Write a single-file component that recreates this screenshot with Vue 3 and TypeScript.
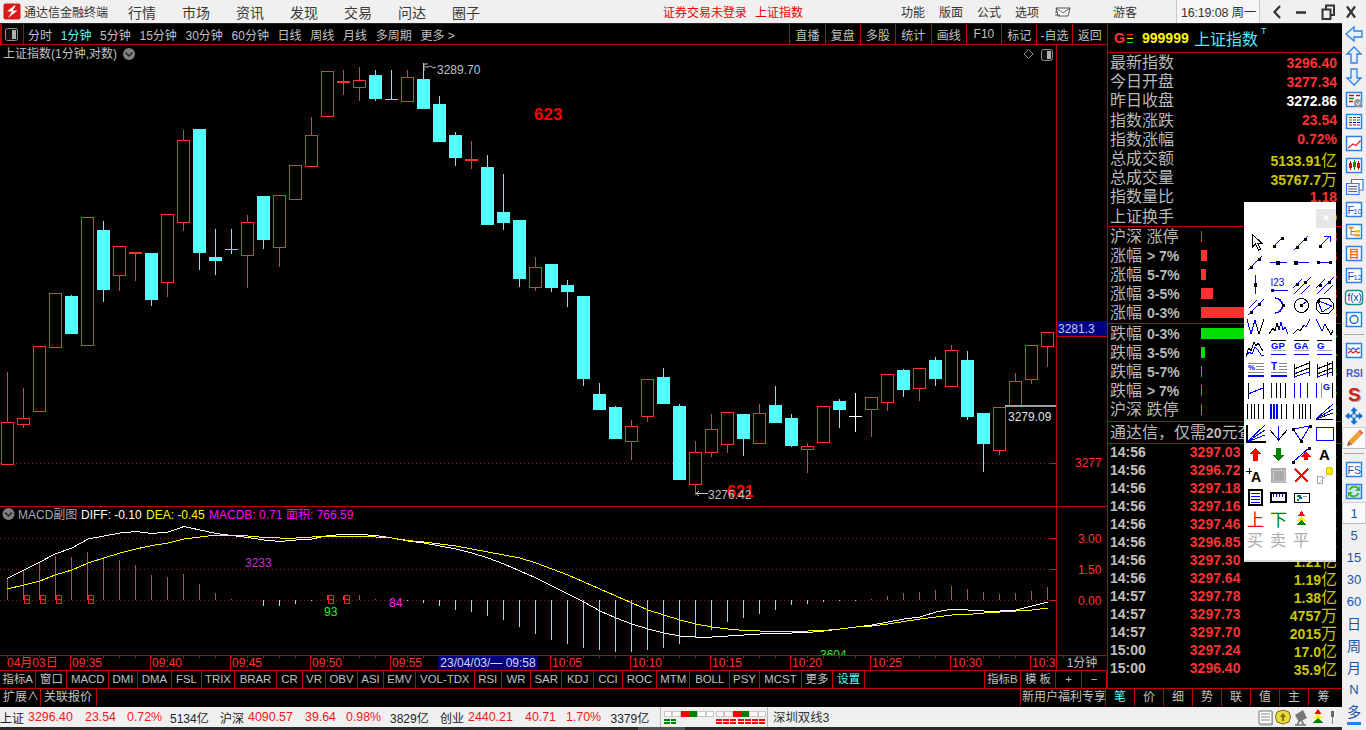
<script setup lang="ts">
interface Prim { d?: string; s?: string; f?: string; w?: number; t?: string; x?: number; y?: number; fs?: number; b?: boolean; fam?: string }
type Icon = Prim[]

const BL = '#0000ff'
const BK = '#000000'
const L = (d: string, s: string = BL, w = 1): Prim => ({ d, s, f: 'none', w })
const dot = (x: number, y: number): Prim => ({ d: `M${x - 1.5} ${y - 1.5}h3v3h-3z`, f: BK })
const T = (t: string, x: number, y: number, fs: number, f: string, b = false): Prim => ({ t, x, y, fs, f, b })
const F = (d: string, f: string): Prim => ({ d, f })

const palette: Icon[] = [
  [{ d: 'M8.5 3.5V16l3-3 3 6 2-1-3-6h4z', s: BK, f: '#fff', w: 1 }],
  [L('M7 15L16 6'), dot(7, 15), dot(15, 7)],
  [L('M4 19L18 5'), dot(7, 16), dot(15, 8)],
  [L('M7 15L17 5'), L('M11 5H17V11'), dot(7, 15)],

  [L('M4 18L18 4'), dot(7, 15), dot(15, 7)],
  [L('M3 10.5H20'), F('M9 8.5h4v4h-4z', BK)],
  [L('M5 10.5H19'), F('M4 8.5h4v4h-4z', BK)],
  [L('M4 10.5H19'), dot(5, 10.5), dot(17, 10.5)],

  [L('M11.5 1V20'), F('M10 8.5h3v4h-3z', BK)],
  [T('I23', 3.5, 11.5, 10, BL), L('M5 16.5H21'), dot(5, 16.5)],
  [L('M3 14L12 5M4 20L21 3M11 20L20 11'), dot(7, 10), dot(15, 8)],
  [L('M3 14L12 5M4 20L21 3M11 20L20 11'), dot(7, 11), dot(16, 8)],

  [L('M5 13L13 5M4 20L20 4'), dot(7, 17), dot(15, 9)],
  [L('M8 3A7.5 7.5 0 0 1 8 18', BL, 1.5), dot(16, 10.5)],
  [{ d: 'M4.5 10.5a7 7 0 1 0 14 0a7 7 0 1 0 -14 0', s: BK, f: 'none', w: 1 }, L('M11.5 10.5L17 6'), dot(11.5, 10.5)],
  [{ d: 'M7 3.5H16L20 8V14L16 18H7L3 14V8Z', s: BK, f: 'none', w: 1 }, L('M5 6L19 11L9 17Z'), dot(5, 6)],

  [L('M3 3L7 18L11 4'), L('M11 4L15 18L20 3', BK)],
  [L('M2 18L6 12L8 15L10 7L12 14', BK), L('M12 14L14 6L16 14L18 11L21 18')],
  [L('M3 18L8 13L10 15L14 9', BK), L('M14 9L16 11L20 3')],
  [L('M3 3L9 15L12 8', BL), L('M12 8L18 19L20 14', BK)],

  [L('M2 18L5 11L7 14L10 5L12 9L14 6L19 14', BK), L('M2 20L5 15L8 17L11 10L14 13L17 18L20 19')],
  [L('M4 3.5H19', BK), T('GP', 4, 11.5, 9.5, BL, true), L('M4 13.5H19', '#aaaaaa', 1), L('M4 17.5H19')],
  [L('M4 3.5H19', BK), T('GA', 4, 11.5, 9.5, BL, true), L('M4 13.5H19', '#aaaaaa', 1), L('M4 17.5H19')],
  [L('M4 3.5H19', BK), T('G', 4, 11.5, 9.5, BL, true), L('M4 13.5H19', '#aaaaaa', 1), L('M4 17.5H19')],

  [L('M4 4.5H20M12 7.5H20M12 10.5H20', '#888888'), T('%', 4, 11, 8, BL, true), L('M4 13.5H20', '#888888'), L('M4 17H20', BL, 2)],
  [L('M12 4.5H20M12 7.5H20M12 10.5H20', '#888888'), T('T', 4, 11, 10, BL, true), L('M4 13.5H20', '#888888'), L('M4 17H20', BL, 2)],
  [L('M4.5 5V19M19.5 2V17', BK), L('M4 10L19 4M4 15L19 9', BK), L('M4 18L19 13')],
  [L('M4.5 5V19M19.5 2V17M14.5 3V18', BK), L('M4 10L19 4M4 15L19 9', BK), L('M4 18L19 13')],

  [L('M4.5 3V19M19.5 3V19', BK), L('M4 14L19 8')],
  [L('M4.5 3V18'), L('M9.5 3V18M13.5 3V18M18.5 3V18', BK)],
  [L('M4.5 3V18M10.5 3V18M17.5 3V18', BL, 1)],
  [L('M3.5 3V18'), L('M8.5 3V18', '#999999', 1), T('G', 10, 10, 9, BL, true), L('M19.5 3V18', BK)],

  [L('M3.5 3V18M7.5 3V18M10.5 3V18M14.5 3V18M19.5 3V18', BK)],
  [L('M4 3V18M7 3V18M9.5 3V18', BL, 2), L('M14.5 3V18M19.5 3V18', BK)],
  [L('M3.5 3V18M9.5 3V18M12.5 3V18M15.5 3V18M20.5 3V18', BK)],
  [L('M3 18L20 12', BK), L('M3 18L20 3M3 18L20 8'), L('M3 18.5H20', BK)],

  [L('M3 2V19H22', BK, 2), L('M3 19L21 2M3 19L21 7M3 19L21 12')],
  [L('M3 7L11.5 17L20 7', BK), L('M11.5 3V17')],
  [L('M3 6L20 3L11 18Z', BL, 1), dot(3, 6), dot(20, 3), dot(11, 18)],
  [L('M3.5 4.5H20.5V17.5H3.5Z', BL, 1)],

  [F('M11.5 4L17 10H14V17H9V10H6Z', '#ff0000')],
  [F('M11.5 17L17 11H14V4H9V11H6Z', '#008000')],
  [L('M3 18L19 4'), dot(3, 18), dot(19, 4), F('M16 7L21 13H18V16H14V13H11Z', '#ff0000')],
  [T('A', 6, 16, 15, BK, true)],

  [T('A', 7, 17, 14, BK, true), L('M5 3V9M2 6H8', BK)],
  [{ d: 'M5 4H18V17H5Z', s: '#aaaaaa', f: '#aaaaaa', w: 2 }, L('M6 5H17V16H6Z', '#cccccc', 1)],
  [L('M5 4L18 17M18 4L5 17', '#ff0000', 1.5)],
  [L('M4.5 11.5H9.5V18.5H4.5Z', '#aaaaaa'), L('M5 19L18 6', '#bbbbbb'), { d: 'M13 6a3.5 3.5 0 1 0 7 0a3.5 3.5 0 1 0 -7 0', f: '#ffee00', s: '#cccc00', w: 1 }],

  [{ d: 'M5 3H18V18H5Z', s: BK, f: '#fff', w: 2 }, L('M7 6.5H16M7 9.5H16M7 12.5H16M7 15.5H16')],
  [L('M4 6H19V15H4Z', BK, 2), L('M6.5 7V10M9.5 7V10M12.5 7V10M15.5 7V10')],
  [L('M4.5 6.5H19.5V15.5H4.5Z', BK), F('M7 8h4v2H7z', '#008040'), F('M9 10h3v2H9z', '#0060c0'), F('M7 12h2v2H7z', '#008040'), L('M13 9.5H17', '#999999')],
  [],

  [T('上', 3, 18, 17, '#ff0000')],
  [T('下', 3, 18, 17, '#008000')],
  [F('M11.5 3L15 8H8Z', '#ff0000'), F('M11.5 7.5L16 12.5H7Z', '#ffee00'), F('M11.5 12L17 17H6Z', '#008000')],
  [],

  [T('买', 3, 17, 16, '#aaaaaa')],
  [T('卖', 3, 17, 16, '#aaaaaa')],
  [T('平', 3, 17, 16, '#aaaaaa')],
  [],
]

const SB = '#2c80ea'
const box: Prim = { d: 'M3.5 4.5H18.5V18.5H3.5Z', s: SB, f: '#fff', w: 1.5 }
interface Side { ic?: Icon; label?: string; big?: boolean; active?: boolean; sep?: boolean }
const side: Side[] = [
  { ic: [{ d: 'M3 11L11 4V8H19V14H11V18Z', s: SB, f: '#e6f1ff', w: 1.3 }] },
  { ic: [{ d: 'M11 3L18 10H14V19H8V10H4Z', s: SB, f: '#e6f1ff', w: 1.3 }] },
  { ic: [{ d: 'M11 19L18 12H14V3H8V12H4Z', s: SB, f: '#e6f1ff', w: 1.3 }] },
  { ic: [box, L('M6 7.5H11M13 7.5H17', '#e00000', 1.5), L('M6 10.5H11', '#008000', 1.5), L('M6 13.5H10', '#e00000', 1.5), { d: 'M11 15a4 4 0 1 0 8 0a4 4 0 1 0 -8 0', f: '#999999' }, L('M13 15l2 2 2-3', '#fff', 1)] },
  { ic: [box, L('M6 7.5H9M10 7.5H13M14 7.5H17', '#e00000', 1.2), L('M6 10H9M10 10H13M14 10H17', '#008000', 1.2), L('M6 12.5H9M10 12.5H13M14 12.5H17', '#0000e0', 1.2), L('M6 15H9M10 15H13M14 15H17', '#e00000', 1.2)] },
  { ic: [box, L('M5 16L10 12L13 13.5L17.5 8.5', '#e82020', 1.2)] },
  { ic: [box, F('M6 9h3v5H6z', '#e00000'), L('M7.5 7V16', '#e00000'), F('M10 8h3v5h-3z', '#009000'), L('M11.5 6V16', '#009000'), F('M14 9h3v5h-3z', '#e00000'), L('M15.5 7V16', '#e00000')] },
  { ic: [{ d: 'M8.5 3.5H20V14H8.5Z', s: SB, f: '#fff', w: 1.2 }, { d: 'M3.5 7.5H16V18.5H3.5Z', s: SB, f: '#e8eef8', w: 1.2 }, L('M5.5 10.5H14M5.5 13H14M5.5 15.5H14', '#666666', 1.2)] },
  { ic: [box, T('F', 4.5, 16, 11, '#1050d0'), T('10', 10.5, 16, 7.5, '#1050d0')] },
  { ic: [box, F('M5.5 6.5h5v2.5h-5z', '#f0a020'), L('M8 9V15H12M8 11.5H12', '#777777'), F('M12 10h5v2.5h-5z', '#f0c020'), F('M12 14h5v2.5h-5z', '#f0a020')] },
  { ic: [box, T('目', 5.5, 16, 11, '#e87010', true)] },
  { ic: [box, T('F', 4.5, 16, 11, '#1050d0'), T('12', 10.5, 16, 7.5, '#1050d0')] },
  { ic: [{ d: 'M6 4.5H16Q19.5 4.5 19.5 8V15Q19.5 18.5 16 18.5H6Q2.5 18.5 2.5 15V8Q2.5 4.5 6 4.5Z', s: '#109080', f: '#fff', w: 1.4 }, T('f(x)', 4.5, 15, 10, '#0040a0', false)] },
  { ic: [box, L('M7 11.5a4 4 0 1 0 8 0a4 4 0 1 0 -8 0', '#1060d0', 1.4)] },
  { sep: true },
  { ic: [{ d: 'M3.5 4.5H18.5V18.5H3.5Z', s: SB, f: '#f4f8ff', w: 1.5 }, L('M5 9L8 11L10 9L13 11L15 9L17 10', '#3060e0', 1.2), L('M5 14L8 12L10 14L13 12L15 14L17 13', '#e02020', 1.2)] },
  { ic: [T('RSI', 3, 15.5, 10, '#4a58d8', true)] },
  { ic: [T('S', 6, 19, 19, '#aaaaaa', true), T('S', 5, 18, 19, '#d02020', true)] },
  { ic: [F('M11 2L14.5 6H12.5V9.5H9.5V6H7.5Z', '#1070d8'), F('M11 20L14.5 16H12.5V12.5H9.5V16H7.5Z', '#1070d8'), F('M2 11L6 7.5V9.5H9.5V12.5H6V14.5Z', '#1070d8'), F('M20 11L16 7.5V9.5H12.5V12.5H16V14.5Z', '#1070d8')] },
  { active: true, ic: [F('M4 19L5.5 14L15 4.5L18.5 8L9 17.5Z', '#f0a030'), F('M4 19L5.5 14L9 17.5Z', '#8a6a50'), F('M15 4.5L17 2.5L20.5 6L18.5 8Z', '#e07060')] },
  { sep: true },
  { ic: [box, T('FS', 4.5, 15.5, 10.5, '#1050d0', false)] },
  { ic: [{ d: 'M3.5 4.5H18.5V18.5H3.5Z', s: SB, f: '#cfe6fb', w: 1.5 }, L('M6.5 10a5 5 0 0 1 9-1', '#40b040', 2), F('M17 6V11H12Z', '#40b040'), L('M15.5 13a5 5 0 0 1-9 1', '#40b040', 2), F('M5 17V12H10Z', '#40b040')] },
  { label: '1', active: true },
  { label: '5' }, { label: '15' }, { label: '30' }, { label: '60' },
  { label: '日', big: true }, { label: '周', big: true }, { label: '月', big: true }, { label: 'N' }, { label: '多', big: true },
  { ic: [F('M4 0H18V3H4Z', SB)] },
]

const stIcons: { w: number; ic: Icon }[] = [
  { w: 18, ic: [{ d: 'M3 4H16V17H3Z', s: '#777777', f: '#fff', w: 1 }, L('M5 7H14M5 10H14M5 13H14', '#888888'), L('M16.5 5V18H4', '#999999')] },
  { w: 18, ic: [{ d: 'M9 3L15 5L16.5 10L15 15L9 17L3 15L1.5 10L3 5Z', s: '#807000', f: '#e8d840', w: 1 }, F('M9 6L12 10H10V14H8V10H6Z', '#807000')] },
  { w: 18, ic: [F('M3 8L11 3L15 11L7 15Z', '#777777'), L('M8 13L5 18M9 13L12 18M3 18H14', '#777777', 1.5)] },
  { w: 16, ic: [F('M8 2L11.5 7H4.5Z', '#e00000'), F('M8 6.5L12.5 11.5H3.5Z', '#ffee00'), F('M8 11L13.5 16H2.5Z', '#008000')] },
  { w: 14, ic: [F('M5 4h3v6H5z', '#666666'), L('M6.5 10V17', '#888888')] },
]

const tools = ['分时', '1分钟', '5分钟', '15分钟', '30分钟', '60分钟', '日线', '周线', '月线', '多周期', '更多 >']
const btns = ['直播', '复盘', '多股', '统计', '画线', 'F10', '标记', '-自选', '返回']

const times = ['09:35', '09:40', '09:45', '09:50', '09:55', '10:00', '10:05', '10:10', '10:15', '10:20', '10:25', '10:30', '10:35']

const tabs: [string, number, string?][] = [
  ['指标A', 36.4], ['窗口', 31], ['MACD', 41.6], ['DMI', 29], ['DMA', 34], ['FSL', 30], ['TRIX', 33], ['BRAR', 42],
  ['CR', 26], ['VR', 23], ['OBV', 32], ['ASI', 26], ['EMV', 32], ['VOL-TDX', 58.6], ['RSI', 27.4], ['WR', 29],
  ['SAR', 31.5], ['KDJ', 31.5], ['CCI', 29], ['ROC', 34], ['MTM', 33.5], ['BOLL', 39.5], ['PSY', 30], ['MCST', 42],
  ['更多', 31], ['设置', 32.5, 'cy'],
]
const tabsRight: [string, number][] = [['指标B', 35.7], ['模 板', 35.3], ['+', 26], ['−', 25]]

const panelTop: [string, string, string, string?][] = [
  ['最新指数', '3296.40', 'r'],
  ['今日开盘', '3277.34', 'r'],
  ['昨日收盘', '3272.86', 'w'],
  ['指数涨跌', '23.54', 'r'],
  ['指数涨幅', '0.72%', 'r'],
  ['总成交额', '5133.91', 'y', '亿'],
  ['总成交量', '35767.7', 'y', '万'],
  ['指数量比', '1.18', 'r'],
  ['上证换手', '0.73%', 'y'],
]

interface Dist { a: string; b?: string; bar: number; v: string }
const ups: Dist[] = [
  { a: '沪深 涨停', bar: 1, v: '28' },
  { a: '涨幅', b: '> 7%', bar: 6, v: '93' },
  { a: '涨幅', b: '5-7%', bar: 5, v: '84' },
  { a: '涨幅', b: '3-5%', bar: 12, v: '233' },
  { a: '涨幅', b: '0-3%', bar: 80, v: '3233' },
]
const downs: Dist[] = [
  { a: '跌幅', b: '0-3%', bar: 80, v: '1604' },
  { a: '跌幅', b: '3-5%', bar: 4, v: '84' },
  { a: '跌幅', b: '5-7%', bar: 1, v: '13' },
  { a: '跌幅', b: '> 7%', bar: 1, v: '3' },
  { a: '沪深 跌停', bar: 1, v: '2' },
]

const ticks: [string, string, string, string][] = [
  ['14:56', '3297.03', '1.10', '亿'], ['14:56', '3296.72', '1.02', '亿'], ['14:56', '3297.18', '1.33', '亿'],
  ['14:56', '3297.16', '1.05', '亿'], ['14:56', '3297.46', '1.40', '亿'], ['14:56', '3296.85', '1.16', '亿'],
  ['14:56', '3297.30', '1.21', '亿'], ['14:56', '3297.64', '1.19', '亿'], ['14:57', '3297.78', '1.38', '亿'],
  ['14:57', '3297.73', '4757', '万'], ['14:57', '3297.70', '2015', '万'], ['15:00', '3297.24', '17.0', '亿'],
  ['15:00', '3296.40', '35.9', '亿'],
]
const rightTabs = ['笔', '价', '细', '势', '联', '值', '主', '筹']

const status: [string, number, string][] = [
  ['上证', 28, 'k'], ['3296.40', 57, 'r'], ['23.54', 42, 'r'], ['0.72%', 43, 'r'], ['5134亿', 50, 'k'],
  ['沪深', 28, 'k'], ['4090.57', 57, 'r'], ['39.64', 41, 'r'], ['0.98%', 44, 'r'], ['3829亿', 50, 'k'],
  ['创业', 28, 'k'], ['2440.21', 57, 'r'], ['40.71', 41, 'r'], ['1.70%', 44.5, 'r'], ['3379亿', 49.5, 'k'],
]

// candles: kind, high, body top, body bottom, low (screen pixels)
const raw: [string, number, number, number, number][] = [
  ['r', 372, 422, 464, 464], ['r', 388, 418, 424, 427], ['r', 346, 346, 411, 411], ['r', 293, 293, 347, 347],
  ['c', 295, 296, 333, 333], ['r', 217, 217, 345, 345], ['c', 221, 230, 289, 301], ['r', 246, 246, 275, 290],
  ['r', 252, 252, 253, 280], ['c', 253, 253, 299, 305], ['r', 214, 214, 282, 296], ['r', 130, 140, 222, 230],
  ['c', 129, 129, 252, 269], ['c', 229, 257, 260, 274], ['w1', 229, 249, 249, 253], ['r', 215, 222, 255, 287],
  ['c', 196, 196, 239, 248], ['r', 195, 195, 247, 266], ['r', 165, 165, 199, 199], ['r', 117, 135, 166, 166],
  ['r', 71, 71, 116, 116], ['r', 70, 81, 82, 94], ['r', 67, 80, 87, 100], ['c', 70, 75, 98, 100],
  ['w1', 70, 99, 99, 99], ['r', 70, 77, 101, 101], ['c', 63, 79, 108, 108], ['c', 96, 104, 141, 141],
  ['c', 132, 135, 157, 165], ['r', 141, 159, 160, 168], ['c', 155, 167, 224, 224], ['c', 174, 212, 222, 229],
  ['c', 220, 220, 278, 286], ['r', 257, 267, 287, 290], ['c', 264, 264, 287, 291], ['c', 280, 285, 291, 306],
  ['c', 296, 296, 378, 385], ['c', 383, 394, 409, 409], ['c', 406, 407, 438, 438], ['r', 420, 426, 441, 459],
  ['r', 379, 379, 416, 421], ['c', 368, 377, 403, 403], ['c', 404, 406, 479, 479], ['r', 441, 452, 484, 494],
  ['r', 414, 429, 452, 456], ['r', 412, 412, 444, 452], ['c', 414, 414, 438, 455], ['r', 404, 413, 443, 443],
  ['c', 386, 405, 422, 422], ['c', 414, 418, 445, 446], ['r', 443, 446, 449, 472], ['r', 406, 406, 442, 442],
  ['c', 399, 401, 409, 427], ['w2', 393, 416, 416, 431], ['r', 397, 397, 409, 436], ['r', 374, 374, 402, 410],
  ['c', 369, 370, 389, 396], ['r', 368, 368, 388, 400], ['c', 357, 360, 378, 385], ['r', 345, 350, 386, 386],
  ['c', 351, 360, 416, 419], ['c', 413, 413, 443, 471], ['r', 407, 407, 450, 454], ['r', 373, 381, 405, 405],
  ['r', 345, 345, 379, 383], ['r', 332, 332, 346, 366],
]
const col = (k: string) => (k[0] === 'r' ? '#ff3232' : k[0] === 'c' ? '#54fcfc' : '#ffffff')
const candles = raw.map(([k0, h, t, b, l], i) => {
  let k = k0
  if (k === 'w1') k = 'c1'
  if (k === 'w2') k = 'w'
  return { cx: 7.5 + 16 * i, k, h, t, b, l, color: col(k) }
})

const macdTops = [578.7, 571, 562.7, 555.7, 557, 551.7, 557.3, 560, 565, 575, 577, 574, 584, 593, 599, 599.5, 606, 606, 604, 601, 595, 596, 595, 599, 599, 601, 603, 606, 610, 612, 616, 620, 627, 634, 640, 644, 648, 650, 652, 652, 650, 648, 644, 638, 630, 622, 618, 614, 610, 605, 604, 602, 601, 601, 599, 596, 593, 592, 590, 586, 589, 592, 594, 593, 591, 587]
const macdBars = macdTops.map((y, i) => ({ x: 7.5 + 16 * i, y: Math.round(y), color: y < 600 ? '#ff3232' : '#54fcfc' }))

const diffPts: [number, number][] = [[7, 578.5], [24, 570], [40, 562], [55, 554], [72, 548], [88, 539], [104, 536], [120, 533], [136, 531.5], [152, 533.5], [168, 532], [184, 526.5], [200, 530], [216, 533.5], [232, 535.5], [248, 537.5], [264, 540], [280, 541.5], [296, 540], [312, 539], [328, 535.5], [344, 534.5], [360, 534.5], [376, 535.5], [392, 538], [408, 541], [424, 543], [440, 546], [456, 549], [472, 553], [488, 558], [504, 564], [520, 571], [536, 578], [552, 586], [568, 594], [584, 602], [600, 611], [616, 618], [632, 624], [648, 629], [664, 633], [680, 636], [696, 637], [712, 637], [728, 636], [744, 635], [760, 634], [776, 633], [792, 633], [808, 632.5], [824, 631], [840, 629], [856, 627], [872, 625], [888, 622], [904, 619], [920, 617], [936, 612], [952, 609], [968, 610], [984, 611], [1000, 611], [1016, 610], [1032, 606], [1048, 602]]
const deaPts: [number, number][] = [[7, 589], [24, 585], [40, 581], [55, 575], [72, 570], [88, 563], [104, 558], [120, 553], [136, 549], [152, 545.5], [168, 543], [184, 539], [200, 537], [216, 535], [232, 535.5], [248, 536], [264, 537.5], [280, 538], [296, 538], [312, 537], [328, 536.5], [344, 536], [360, 536], [376, 537], [392, 538], [408, 540.5], [424, 542], [440, 544], [456, 546], [472, 549], [488, 552], [504, 555], [520, 558], [536, 563], [552, 569], [568, 575], [584, 582], [600, 589], [616, 596], [632, 603], [648, 610], [664, 615], [680, 620], [696, 624], [712, 627], [728, 629], [744, 630.5], [760, 631], [776, 631.5], [792, 631], [808, 631], [824, 630.5], [840, 629], [856, 627], [872, 626], [888, 624], [904, 621.5], [920, 619], [936, 617], [952, 615], [968, 614.5], [984, 613], [1000, 612], [1016, 611], [1032, 610], [1048, 608]]
const poly = (a: [number, number][]) => a.map((p) => p.join(',')).join(' ')
const diffLine = poly(diffPts)
const deaLine = poly(deaPts)

const signals = [26.5, 42.5, 58.5, 90.5, 330.5, 346.5]
const macdGrid: [number, string][] = [[538.5, '3.00'], [569.5, '1.50'], [600.5, '0.00']]
</script>

<template>
  <div class="app">
    <header class="title">
      <svg class="logo" width="18" height="17" viewBox="0 0 18 17">
        <rect x="0.5" y="0.5" width="17" height="16" rx="2" fill="#d81a1a" />
        <path d="M12 2L4 8.5H9L5 15L14.5 7.5H9.5L12.5 3Z" fill="#ffffff" />
      </svg>
      <span class="app-name">通达信金融终端</span>
      <nav class="menu">
        <span v-for="m in ['行情', '市场', '资讯', '发现', '交易', '问达', '圈子']" :key="m">{{ m }}</span>
      </nav>
      <span class="notice login">证券交易未登录</span>
      <span class="notice idx">上证指数</span>
      <nav class="submenu">
        <span v-for="m in ['功能', '版面', '公式', '选项']" :key="m">{{ m }}</span>
      </nav>
      <svg class="mail" width="16" height="12" viewBox="0 0 16 12">
        <path d="M1 2H15L13 10H3Z" fill="#ffffff" stroke="#555555" />
        <path d="M1 2L8 7L15 2M0 9H5M0 6H3" fill="none" stroke="#555555" />
      </svg>
      <span class="guest">游客</span>
      <span class="clock">16:19:08 周一</span>
      <svg class="win" width="104" height="22" viewBox="0 0 104 22">
        <path d="M20 5L14.5 11L20 17" fill="none" stroke="#333333" stroke-width="2.2" />
        <path d="M36 11.5H46" stroke="#333333" stroke-width="2.5" />
        <path d="M62.5 8.5H70.5V18H62.5ZM66 8V4.5H74V14H71" fill="none" stroke="#333333" stroke-width="2" />
        <path d="M87 5.5L95 16.5M95 5.5L87 16.5" stroke="#333333" stroke-width="2.2" />
      </svg>
    </header>

    <div class="body">
      <div class="workspace">
        <div class="upper">
          <section class="chart-col">
            <div class="toolbar">
              <div class="layout-btn">
                <svg width="13" height="13" viewBox="0 0 13 13">
                  <rect x="0.5" y="0.5" width="12" height="12" rx="2" fill="#111111" stroke="#909090" />
                  <rect x="7" y="2" width="4" height="9" fill="#b0b0b0" />
                </svg>
              </div>
              <div class="periods">
                <span v-for="t in tools" :key="t" :class="{ cy: t === '1分钟' }">{{ t }}</span>
              </div>
              <div class="btns">
                <span v-for="b in btns" :key="b" class="btn">{{ b }}</span>
              </div>
            </div>

            <svg class="stage" width="1107" height="610" viewBox="0 45 1107 610">
              <text x="3" y="58" class="t12" fill="#c0c0c0">上证指数(1分钟,对数)</text>
              <circle cx="129" cy="54" r="6" fill="#808080" />
              <path d="M125.5 52.5L129 56L132.5 52.5" fill="none" stroke="#222222" stroke-width="1.5" />
              <path d="M1028.5 49.5L1033 54L1028.5 58.5L1024 54Z" fill="none" stroke="#909090" />
              <rect x="1041.5" y="49.5" width="11" height="11" rx="2" fill="#111111" stroke="#909090" />
              <rect x="1047" y="51" width="4" height="8" fill="#b0b0b0" />

              <path d="M0 463.5H1050" stroke="#a02020" stroke-dasharray="1 3" />
              <g v-for="(c, i) in candles" :key="i" shape-rendering="crispEdges">
                <path :d="`M${c.cx} ${c.h}V${c.l + 1}`" :stroke="c.color" fill="none" />
                <rect v-if="c.k === 'r'" :x="c.cx - 6" :y="c.t + 0.5" width="12" :height="Math.max(c.b - c.t, 1)" fill="#000000" :stroke="c.color" />
                <rect v-else-if="c.k === 'c'" :x="c.cx - 6.5" :y="c.t" width="13" :height="c.b - c.t + 1" :fill="c.color" />
                <rect v-else :x="c.cx - 6.5" :y="c.t" width="13" height="1" :fill="c.color" />
              </g>

              <path d="M424 71V64H428M425 67H428" fill="none" stroke="#c0c0c0" />
              <path d="M428 67q2-2 4 0t4 0" fill="none" stroke="#c0c0c0" />
              <text x="437" y="74" class="t12" fill="#c0c0c0">3289.70</text>
              <text x="534" y="120" class="b17" fill="#ff0000">623</text>
              <text x="727" y="497" class="b15" fill="#ff0000">621</text>
              <path d="M708 493.5H696M699 491L696 493.5L699 496" fill="none" stroke="#c0c0c0" />
              <text x="708" y="499" class="t12" fill="#c0c0c0">3276.42</text>

              <rect x="1005" y="405" width="52" height="2" fill="#a0a0a0" />
              <text x="1008" y="421" class="t12" fill="#e0e0e0">3279.09</text>
              <rect x="1057" y="321" width="50" height="15" fill="#000080" />
              <text x="1058" y="333" class="t12" fill="#c8c8ff">3281.3</text>
              <path d="M1057 336.5H1107" stroke="#c00000" />
              <path d="M1050 463.5H1056" stroke="#c02020" />
              <text x="1075" y="467" class="t12" fill="#ff3232">3277</text>

              <path d="M1056.5 45V655" stroke="#c00000" shape-rendering="crispEdges" />
              <path d="M0 506.5H1107" stroke="#c00000" shape-rendering="crispEdges" />

              <circle cx="8.5" cy="514" r="6" fill="#808080" />
              <path d="M5 512.5L8.5 516L12 512.5" fill="none" stroke="#222222" stroke-width="1.5" />
              <text x="18" y="519" class="t12" fill="#a8a8a8">MACD副图</text>
              <text x="81" y="519" class="t12" fill="#ffffff">DIFF: -0.10</text>
              <text x="146" y="519" class="t12" fill="#ffff00">DEA: -0.45</text>
              <text x="209" y="519" class="t12" fill="#ff00ff">MACDB: 0.71</text>
              <text x="286" y="519" class="t12" fill="#ff00ff">面积: 766.59</text>

              <g v-for="g in macdGrid" :key="g[1]">
                <path :d="`M0 ${g[0]}H1050`" stroke="#901818" stroke-dasharray="1 3" />
                <path :d="`M1050 ${g[0]}H1056`" stroke="#c02020" />
                <text x="1078" :y="g[0] + 4" class="t12" fill="#ff3232">{{ g[1] }}</text>
              </g>

              <path v-for="b in macdBars" :key="b.x" :d="`M${b.x} ${b.y}V600`" :stroke="b.color" shape-rendering="crispEdges" />
              <polyline :points="diffLine" fill="none" stroke="#ffffff" shape-rendering="crispEdges" />
              <polyline :points="deaLine" fill="none" stroke="#ffff00" shape-rendering="crispEdges" />

              <g v-for="s in signals" :key="s" shape-rendering="crispEdges">
                <path :d="`M${s - 2.5} 595.5h5v8h-5zM${s - 2.5} 599.5h5`" fill="none" stroke="#ff2020" />
              </g>
              <text x="245" y="567" class="t12" fill="#c030d0">3233</text>
              <text x="324" y="616" class="t12" fill="#20f020">93</text>
              <text x="389" y="607" class="t12" fill="#ff20ff">84</text>
              <text x="820" y="659" class="t12" fill="#20f020">3604</text>
            </svg>

            <div class="axis">
              <span class="ax-date">04月03日</span>
              <span v-for="(t, i) in times" :key="t" class="ax-t" :class="{ 'ax-end': i === times.length - 1 }">{{ t }}</span>
              <span class="ax-box">1分钟</span>
              <span class="ax-cross">23/04/03/— 09:58</span>
            </div>

            <div class="tabs">
              <span v-for="t in tabs" :key="t[0]" class="tab" :class="t[2]" :style="{ width: t[1] + 'px' }">{{ t[0] }}</span>
              <span class="tab-fill"></span>
              <span v-for="t in tabsRight" :key="t[0]" class="tab" :style="{ width: t[1] + 'px' }">{{ t[0] }}</span>
            </div>
          </section>

          <aside class="panel">
            <div class="p-head">
              <span class="g">G</span>
              <svg width="8" height="12" viewBox="0 0 8 12" class="eq">
                <path d="M1 2.5H7" stroke="#ff3232" />
                <path d="M1 6.5H7" stroke="#ffff00" />
                <path d="M1 10.5H7" stroke="#20f020" />
              </svg>
              <span class="code">999999</span>
              <span class="nm">上证指数</span>
              <sup class="tt">T</sup>
            </div>
            <div class="p-top">
              <div v-for="r in panelTop" :key="r[0]" class="p-row">
                <span class="lbl">{{ r[0] }}</span>
                <span class="num" :class="r[2]">{{ r[1] }}<i v-if="r[3]" class="unit">{{ r[3] }}</i></span>
              </div>
            </div>
            <div class="p-dist">
              <div v-for="d in ups" :key="d.a + d.b" class="d-row">
                <span class="d-lbl">{{ d.a }}<b v-if="d.b" class="d-b">{{ d.b }}</b></span>
                <span class="d-bar up" :style="{ width: d.bar + 'px' }"></span>
                <span class="num r d-v">{{ d.v }}</span>
              </div>
            </div>
            <div class="p-dist last">
              <div v-for="d in downs" :key="d.a + d.b" class="d-row">
                <span class="d-lbl">{{ d.a }}<b v-if="d.b" class="d-b">{{ d.b }}</b></span>
                <span class="d-bar down" :style="{ width: d.bar + 'px' }"></span>
                <span class="num g-t d-v">{{ d.v }}</span>
              </div>
            </div>
            <div class="banner">通达信，仅需<b>20</b>元查看</div>
            <div class="p-ticks">
              <div v-for="(t, i) in ticks" :key="i" class="t-row">
                <span class="num gray">{{ t[0] }}</span>
                <span class="num r t-p">{{ t[1] }}</span>
                <span class="num y t-v">{{ t[2] }}<i class="unit">{{ t[3] }}</i></span>
              </div>
            </div>

            <div class="palette">
              <span class="pal-x">×</span>
              <svg v-for="(ic, i) in palette" :key="i" width="23" height="21" viewBox="0 0 23 21" class="pal-ic">
                <template v-for="(p, j) in ic" :key="j">
                  <text v-if="p.t" :x="p.x" :y="p.y" :font-size="p.fs" :fill="p.f" :font-weight="p.b ? 700 : 400" class="ic-t">{{ p.t }}</text>
                  <path v-else :d="p.d" :stroke="p.s || 'none'" :fill="p.f || 'none'" :stroke-width="p.w || 1" />
                </template>
              </svg>
            </div>
          </aside>
        </div>

        <div class="extra">
          <span class="ex">扩展∧</span>
          <span class="ex">关联报价</span>
          <span class="ex-fill"></span>
          <span class="ex promo">新用户福利专享</span>
          <span v-for="t in rightTabs" :key="t" class="r-tab" :class="{ cy: t === '笔' }">{{ t }}</span>
        </div>

        <footer class="status">
          <span v-for="(s, i) in status" :key="i" class="st" :class="s[2]" :style="{ width: s[1] + 'px' }">{{ s[0] }}</span>
          <div class="st-box">
            <div v-for="(kind, n) in ['g', 'r']" :key="n" class="mini">
              <div class="mini-top">
                <i></i><i></i><i class="m-r"></i><i class="m-g"></i><i></i><i></i>
              </div>
              <div class="mini-row" :class="kind"></div>
              <div class="mini-row" :class="kind"></div>
            </div>
          </div>
          <span class="st-name">深圳双线3</span>
          <div class="st-icons">
            <svg v-for="(s, i) in stIcons" :key="i" :width="s.w" height="20" :viewBox="`0 0 ${s.w} 20`">
              <path v-for="(p, j) in s.ic" :key="j" :d="p.d" :stroke="p.s || 'none'" :fill="p.f || 'none'" :stroke-width="p.w || 1" />
            </svg>
          </div>
        </footer>
        <div class="sysbar"><i class="thumb"></i></div>
      </div>

      <aside class="sidebar">
        <template v-for="(s, i) in side" :key="i">
          <div v-if="s.sep" class="sb-sep"></div>
          <div v-else class="sb-cell" :class="{ active: s.active, big: s.big }">
            <svg v-if="s.ic" width="22" height="22" viewBox="0 0 22 22">
              <template v-for="(p, j) in s.ic" :key="j">
                <text v-if="p.t" :x="p.x" :y="p.y" :font-size="p.fs" :fill="p.f" :font-weight="p.b ? 700 : 400" class="ic-t">{{ p.t }}</text>
                <path v-else :d="p.d" :stroke="p.s || 'none'" :fill="p.f || 'none'" :stroke-width="p.w || 1" />
              </template>
            </svg>
            <template v-else>{{ s.label }}</template>
          </div>
        </template>
      </aside>
    </div>
  </div>
</template>

<style scoped>
* { box-sizing: border-box; }
.app {
  width: 1366px;
  height: 730px;
  overflow: hidden;
  display: flex;
  flex-direction: column;
  background: #000;
  color: #c0c0c0;
  font-family: "Liberation Sans", "Noto Sans CJK SC", sans-serif;
  font-size: 12px;
}
i { font-style: normal; }
.cy { color: #54fcfc !important; }

.title {
  height: 23px;
  flex: none;
  background: #f0f0f0;
  display: flex;
  align-items: center;
  color: #333;
}
.logo { margin-left: 3px; flex: none; }
.app-name { margin-left: 3px; width: 84px; font-size: 12px; white-space: nowrap; }
.menu { display: flex; gap: 26px; margin-left: 20px; font-size: 14px; color: #3a3a3a; white-space: nowrap; }
.notice { color: #f00000; font-size: 12px; white-space: nowrap; }
.login { margin-left: 183px; }
.idx { margin-left: 8px; }
.submenu { display: flex; gap: 14px; margin-left: 98px; font-size: 12px; white-space: nowrap; }
.mail { margin-left: 16px; flex: none; }
.guest { margin-left: 42px; width: 63px; }
.clock {
  align-self: stretch;
  width: 84px;
  flex: none;
  display: flex;
  align-items: center;
  padding-left: 4px;
  border-left: 1px solid #c8c8c8;
  border-right: 1px solid #c8c8c8;
  white-space: nowrap;
  background: #f6f6f6;
  font-size: 12.5px;
  letter-spacing: -0.2px;
  overflow: hidden;
}
.win { flex: none; }

.body { flex: 1; min-height: 0; display: flex; }
.workspace { width: 1342px; flex: none; display: flex; flex-direction: column; border-top: 1px solid #222; }
.upper { height: 664px; flex: none; display: flex; }

.chart-col { width: 1107px; flex: none; display: flex; flex-direction: column; }
.toolbar { height: 21px; flex: none; display: flex; border-bottom: 1px solid #c00000; align-items: center; }
.layout-btn {
  width: 24px;
  align-self: stretch;
  border-left: 2px solid #c00000;
  border-right: 1px solid #c00000;
  display: flex;
  align-items: center;
  justify-content: center;
  padding-right: 2px;
}
.periods { display: flex; gap: 8.7px; margin-left: 4px; white-space: nowrap; color: #c0c0c0; }
.btns { margin-left: auto; display: flex; align-self: stretch; }
.btn {
  width: 35.3px;
  border-left: 1px solid #c00000;
  display: flex;
  align-items: center;
  justify-content: center;
  white-space: nowrap;
}

.stage { display: block; flex: none; }
.t12 { font-size: 12px; font-family: "Liberation Sans", "Noto Sans CJK SC", sans-serif; }
.b17 { font-size: 17px; font-weight: 700; font-family: "Liberation Sans", sans-serif; }
.b15 { font-size: 16px; font-weight: 700; font-family: "Liberation Sans", sans-serif; }
.ic-t { font-family: "Liberation Sans", "Noto Sans CJK SC", sans-serif; }

.axis {
  position: relative;
  height: 16px;
  flex: none;
  display: flex;
  border-top: 1px solid #c00000;
  border-bottom: 1px solid #c00000;
  color: #ff3232;
  line-height: 14px;
  background: repeating-linear-gradient(90deg, #c00000 0 1px, transparent 1px 16px) 7px 0 / 100% 2px no-repeat;
  overflow: hidden;
}
.ax-date { width: 70px; padding-left: 7px; flex: none; white-space: nowrap; }
.ax-t { width: 80px; flex: none; border-left: 1px solid #c00000; padding-left: 1px; overflow: hidden; white-space: nowrap; }
.ax-t.ax-end { width: 26px; }
.ax-box { width: 51px; flex: none; border-left: 1px solid #c00000; text-align: center; color: #c0c0c0; }
.ax-cross {
  position: absolute;
  left: 438px;
  top: 0;
  width: 100px;
  height: 14px;
  background: #000080;
  color: #d8d8ff;
  text-align: center;
  white-space: nowrap;
  line-height: 14px;
}

.tabs { height: 17px; flex: none; display: flex; color: #c0c0c0; overflow: hidden; }
.tab {
  flex: none;
  border-right: 1px solid #c00000;
  text-align: center;
  white-space: nowrap;
  font-size: 11.4px;
  line-height: 16px;
  overflow: hidden;
}
.tab-fill { flex: 1; border-right: 1px solid #c00000; }

.panel {
  position: relative;
  width: 235px;
  flex: none;
  border-left: 1px solid #c00000;
  display: flex;
  flex-direction: column;
  overflow: hidden;
}
.p-head {
  height: 29px;
  flex: none;
  border-bottom: 1px solid #c00000;
  display: flex;
  align-items: center;
  padding-left: 6px;
}
.g { color: #ff3232; font-weight: 700; font-size: 14px; width: 12px; }
.eq { margin-right: 8px; }
.code { color: #ffff00; font-weight: 700; font-size: 14px; width: 52px; }
.nm { color: #54e8fc; font-size: 16px; }
.tt { color: #54e8fc; font-size: 9px; margin-left: 3px; align-self: flex-start; margin-top: 3px; line-height: 1; }
.p-top { height: 174px; flex: none; border-bottom: 1px solid #c00000; }
.p-row { height: 19.2px; display: flex; align-items: center; justify-content: space-between; padding: 0 5px 0 2px; }
.lbl { font-size: 16px; color: #b8b8b8; line-height: 19px; }
.num { font-size: 14px; font-weight: 700; white-space: nowrap; }
.r { color: #ff3232; }
.w { color: #fff; }
.y { color: #c8c800; }
.g-t { color: #00e000; }
.gray { color: #c0c0c0; }
.unit { font-size: 16px; font-weight: 400; }

.p-dist { height: 97px; flex: none; border-bottom: 1px solid #c00000; }
.p-dist.last { height: 98px; }
.d-row { height: 19px; display: flex; align-items: center; padding: 0 5px 0 2px; }
.d-lbl { width: 91px; flex: none; font-size: 16px; color: #b8b8b8; white-space: nowrap; line-height: 19px; }
.d-b { font-size: 14px; margin-left: 5px; }
.d-bar { height: 11px; flex: none; }
.d-bar.up { background: #ff3232; }
.d-bar.down { background: #00e000; }
.d-v { margin-left: auto; }

.banner {
  height: 22px;
  flex: none;
  border-bottom: 1px solid #c00000;
  font-size: 16px;
  color: #b8b8b8;
  line-height: 21px;
  padding-left: 2px;
  white-space: nowrap;
  overflow: hidden;
}
.banner b { font-size: 14px; }
.p-ticks { flex: 1; margin-top: -1px; }
.t-row { height: 18px; display: flex; align-items: center; padding: 0 5px 0 2px; }
.t-p { margin-left: 44px; }
.t-v { margin-left: auto; }

.palette {
  position: absolute;
  left: 136px;
  top: 178px;
  width: 92px;
  height: 360px;
  background: #fff;
  border-bottom: 2px solid #d8d8d8;
  padding-top: 29px;
  display: grid;
  grid-template-columns: repeat(4, 23px);
  grid-auto-rows: 21.3px;
}
.pal-ic { display: block; }
.pal-ic path { shape-rendering: crispEdges; }
.pal-x {
  position: absolute;
  right: 0;
  top: 7px;
  width: 20px;
  height: 19px;
  background: #e6e6e6;
  color: #fff;
  text-align: center;
  line-height: 19px;
  font-weight: 700;
}

.extra { height: 18px; flex: none; display: flex; border-top: 1px solid #c00000; color: #c0c0c0; }
.ex { border-right: 1px solid #c00000; padding: 0 0 0 3px; line-height: 17px; white-space: nowrap; flex: none; }
.ex:nth-child(1) { width: 41px; }
.ex:nth-child(2) { width: 56px; }
.ex-fill { flex: 1; }
.promo { width: 86px; border-left: 1px solid #c00000; border-right: 1px solid #c00000; padding-left: 1px; overflow: hidden; }
.r-tab { width: 29px; flex: none; border-right: 1px solid #c00000; text-align: center; font-size: 12px; line-height: 17px; }
.r-tab:last-child { width: 33px; border-right: 0; padding-right: 4px; }

.status {
  height: 20px;
  flex: none;
  margin-top: 1px;
  background: #f0f0f0;
  display: flex;
  align-items: center;
  white-space: nowrap;
}
.st { flex: none; font-size: 12.4px; }
.st.k { color: #222; font-size: 12px; }
.st.r { color: #f01818; }
.st-box {
  width: 108px;
  flex: none;
  align-self: stretch;
  display: flex;
  gap: 2px;
  border-left: 1px solid #b8b8b8;
  border-right: 1px solid #b8b8b8;
  padding: 4px 0 0 3px;
}
.mini { width: 50px; }
.mini-top { display: flex; height: 6px; margin-bottom: 2px; }
.mini-top i { flex: 1; border: 1px solid #c8c8c8; background: #fff; }
.mini-top .m-r { background: #ff0000; border-color: #ff0000; }
.mini-top .m-g { background: #008000; border-color: #008000; }
.mini-row { height: 2px; margin-bottom: 1px; }
.mini-row.g { background: repeating-linear-gradient(90deg, #008000 0 6px, transparent 6px 7.2px); }
.mini-row.r { background: repeating-linear-gradient(90deg, #ff0000 0 6px, transparent 6px 7.2px); }
.st-name { margin-left: 5px; color: #333; font-size: 12.4px; }
.st-icons { margin-left: auto; display: flex; margin-right: 2px; }
.st-icons svg { display: block; }
.sysbar { flex: 1; background: #2a2a2a; position: relative; }
.thumb { position: absolute; left: 638px; top: 0; width: 47px; height: 100%; background: #555; }

.sidebar {
  flex: 1;
  background: #f0f0f0;
  display: flex;
  flex-direction: column;
  overflow: hidden;
  color: #1a55a8;
}
.sb-cell {
  height: 22px;
  flex: none;
  display: flex;
  align-items: center;
  justify-content: center;
  font-size: 13px;
}
.sb-cell:first-child { height: 21px; }
.sb-cell.big { font-size: 14px; }
.sb-cell.active { background: #fafafa; border: 1px solid #d0d0d0; border-bottom-color: #bbb; }
.sb-sep { height: 5px; flex: none; border-bottom: 1px solid #aaa; margin: 0 2px 4px; }
.sb-cell svg { display: block; flex: none; }
</style>

<style>
html, body { margin: 0; padding: 0; background: #000; overflow: hidden; }
</style>
